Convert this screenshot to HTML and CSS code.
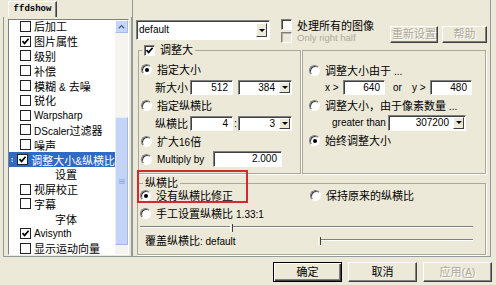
FILE: index.html
```html
<!DOCTYPE html>
<html lang="zh-CN">
<head>
    <meta charset="UTF-8">
    <meta name="viewport" content="width=device-width, initial-scale=1.0">
    <title>ffdshow 设置</title>
    <link rel="stylesheet" href="styles.css">
</head>
<body>
    <div class="window">
        <div class="main">
            <div class="side">
                <div class="tab">ffdshow</div>
                <div class="side-frame">
                    <div class="filter-list">
                        <ul class="items">
                            <li><span class="check"></span>后加工</li>
                            <li><span class="check on"><svg viewBox="0 0 9 9"><path d="M1.5 4.2 L3.6 6.4 L7.6 1.8"/></svg></span>图片属性</li>
                            <li><span class="check"></span>级别</li>
                            <li><span class="check"></span>补偿</li>
                            <li><span class="check"></span><span>模糊 <span class="lat">&amp;</span> 去噪</span></li>
                            <li><span class="check"></span>锐化</li>
                            <li><span class="check"></span><span class="lat">Warpsharp</span></li>
                            <li><span class="check"></span><span><span class="lat">DScaler</span>过滤器</span></li>
                            <li><span class="check"></span>噪声</li>
                            <li class="selected">
                                <svg class="order" viewBox="0 0 5 10"><path d="M2.5 0 L5 3.5 H0 Z M2.5 10 L0 6.5 H5 Z"/></svg>
                                <span class="check on"><svg viewBox="0 0 9 9"><path d="M1.5 4.2 L3.6 6.4 L7.6 1.8"/></svg></span>
                                <span>调整大小<span class="lat">&amp;</span>纵横比</span>
                            </li>
                            <li class="sub">设置</li>
                            <li><span class="check"></span>视屏校正</li>
                            <li><span class="check"></span>字幕</li>
                            <li class="sub">字体</li>
                            <li><span class="check on"><svg viewBox="0 0 9 9"><path d="M1.5 4.2 L3.6 6.4 L7.6 1.8"/></svg></span><span class="lat">Avisynth</span></li>
                            <li><span class="check"></span>显示运动向量</li>
                        </ul>
                        <div class="vscroll">
                            <div class="sb-up"><svg viewBox="0 0 8 5"><polyline points="1,4.5 4,1.5 7,4.5"/></svg></div>
                            <div class="sb-track">
                                <div class="sb-thumb"><svg viewBox="0 0 7 5"><path d="M0 0.5 H7 M0 2.5 H7 M0 4.5 H7"/></svg></div>
                            </div>
                        </div>
                    </div>
                </div>
            </div>

            <div class="page">
                <div class="page-top">
                    <div class="combo preset">
                        <span class="combo-value">default</span>
                        <span class="drop"></span>
                    </div>
                    <div class="checks">
                        <div class="check-row"><span class="box"></span>处理所有的图像</div>
                        <div class="check-row disabled"><span class="box"></span><span class="small">Only right half</span></div>
                    </div>
                    <div class="top-buttons">
                        <div class="btn disabled reset">重新设置</div>
                        <div class="btn disabled help">帮助</div>
                    </div>
                </div>

                <div class="resize-row">
                    <fieldset class="group size-group">
                        <legend><span class="box on"><svg viewBox="0 0 9 9"><path d="M1.5 4.2 L3.6 6.4 L7.6 1.8"/></svg></span>调整大</legend>
                        <div class="opt"><span class="radio on"></span>指定大小</div>
                        <div class="opt indent">
                            <span class="lbl">新大小</span>
                            <span class="field num-a">512</span>
                            <span class="combo num-b"><span class="combo-value">384</span><span class="drop"></span></span>
                        </div>
                        <div class="opt"><span class="radio"></span>指定纵横比</div>
                        <div class="opt indent">
                            <span class="lbl">纵横比</span>
                            <span class="field num-a">4</span><span class="colon">:</span>
                            <span class="combo num-b"><span class="combo-value">3</span><span class="drop"></span></span>
                        </div>
                        <div class="opt"><span class="radio"></span><span>扩大<span class="lat">16</span>倍</span></div>
                        <div class="opt">
                            <span class="radio"></span><span class="mult-label lat">Multiply by</span>
                            <span class="field mult">2.000</span>
                        </div>
                    </fieldset>

                    <fieldset class="group when-group">
                        <div class="opt"><span class="radio"></span><span>调整大小由于 <span class="lat">...</span></span></div>
                        <div class="opt indent lat">
                            <span class="xlbl">x &gt;</span>
                            <span class="field dim">640</span>
                            <span class="or">or</span>
                            <span class="ylbl">y &gt;</span>
                            <span class="field dim">480</span>
                        </div>
                        <div class="opt"><span class="radio"></span><span>调整大小，由于像素数量 <span class="lat">...</span></span></div>
                        <div class="opt indent">
                            <span class="gt lat">greater than</span>
                            <span class="combo pixels"><span class="combo-value">307200</span><span class="drop"></span></span>
                        </div>
                        <div class="opt"><span class="radio on"></span>始终调整大小</div>
                    </fieldset>
                </div>

                <fieldset class="group aspect-group">
                    <legend>纵横比</legend>
                    <div class="aspect-row">
                        <div class="opt"><span class="radio on"></span>没有纵横比修正</div>
                        <div class="opt"><span class="radio"></span>保持原来的纵横比</div>
                    </div>
                    <div class="opt manual"><span class="radio"></span><span>手工设置纵横比 <span class="lat">1.33:1</span></span></div>
                    <div class="slider-row">
                        <div class="slider wide-slider"><span class="thumb" style="left: 90px;"></span></div>
                    </div>
                    <div class="override-row">
                        <span class="override-label">覆盖纵横比<span class="lat">: default</span></span>
                        <div class="slider short-slider"><span class="thumb" style="left: 0px;"></span></div>
                    </div>
                </fieldset>
            </div>
        </div>

        <div class="footer">
            <div class="btn default">确定</div>
            <div class="btn">取消</div>
            <div class="btn disabled">应用(<u class="lat">A</u>)</div>
        </div>

        <div class="highlight-mark"></div>
    </div>
</body>
</html>
```

FILE: styles.css
```css
body {
    margin: 0;
    background-color: #ece9d8;
    font-family: "Liberation Sans", "Noto Sans CJK SC", sans-serif;
    font-size: 11px;
    color: #000;
}

.lat {
    font-size: 10px;
}

.window {
    position: relative;
    width: 496px;
    height: 285px;
    overflow: hidden;
    display: flex;
    flex-direction: column;
}

.main {
    display: flex;
    height: 258px;
}

/* left side: filter list */
.side {
    width: 132px;
    flex-shrink: 0;
}

.tab {
    margin: 1px 0 0 8px;
    width: 47px;
    height: 15px;
    border: 1px solid;
    border-color: #fff #404040 transparent #fff;
    border-bottom: none;
    box-shadow: inset -1px 0 0 #808080;
    font-family: "Liberation Mono", monospace;
    font-weight: bold;
    font-size: 9px;
    line-height: 15px;
    text-align: center;
}

.side-frame {
    margin-left: 3px;
    height: 237px;
    padding: 2px 0 0 4px;
    border-left: 1px solid #919b9c;
    border-bottom: 1px solid #919b9c;
    border-right: 1px solid #919b9c;
}

.filter-list {
    display: flex;
    width: 121px;
    height: 236px;
    box-sizing: border-box;
    background: #fff;
    border: 1px solid;
    border-color: #7f7f7f #fff #fff #7f7f7f;
}

.items {
    list-style: none;
    margin: -1px 0 0 0;
    padding: 0;
    flex: 1;
    overflow: hidden;
}

.items li {
    height: 14.8px;
    display: flex;
    align-items: center;
    padding-left: 11px;
    white-space: nowrap;
}

.items li.selected {
    background: #316ac5;
    color: #fff;
    padding-left: 2px;
}

.items li.sub {
    justify-content: center;
    padding-left: 8px;
}

.order {
    width: 5px;
    height: 10px;
    margin-right: 4px;
    fill: #fff;
}

.check {
    width: 11px;
    height: 11px;
    box-sizing: border-box;
    border: 1px solid #222;
    background: #fff;
    margin-right: 3px;
    flex-shrink: 0;
    display: flex;
    align-items: center;
    justify-content: center;
}

.check svg, .box svg {
    width: 9px;
    height: 9px;
    fill: none;
    stroke: #000;
    stroke-width: 1.7;
}

.vscroll {
    width: 13px;
    display: flex;
    flex-direction: column;
    background: #f5f4ef;
}

.sb-up {
    height: 13px;
    box-sizing: border-box;
    background: #c6d5fa;
    border: 1px solid;
    border-color: #fff #a8bbe9 #a8bbe9 #fff;
    display: flex;
    align-items: center;
    justify-content: center;
}

.sb-up svg {
    width: 7px;
    height: 5px;
    fill: none;
    stroke: #4d6185;
    stroke-width: 1.5;
}

.sb-track {
    flex: 1;
    padding-top: 84px;
}

.sb-thumb {
    height: 128px;
    box-sizing: border-box;
    background: #c4d4f7;
    border: 1px solid;
    border-color: #e6edfd #a5b8e5 #a5b8e5 #e6edfd;
    display: flex;
    align-items: center;
    justify-content: center;
}

.sb-thumb svg {
    width: 6px;
    height: 5px;
    stroke: #8ea4d6;
    stroke-width: 1;
}

/* right side: settings page */
.page {
    width: 359px;
    height: 257px;
    box-sizing: border-box;
    border-left: 1px solid #919b9c;
    border-right: 1px solid #919b9c;
    border-bottom: 1px solid #919b9c;
}

.page-top {
    display: flex;
    align-items: flex-start;
    height: 26px;
    padding-top: 18px;
}

.combo {
    display: flex;
    box-sizing: border-box;
    background: #fff;
    border: 1px solid;
    border-color: #808080 #fff #fff #808080;
    box-shadow: inset 1px 1px 0 #404040;
    font-size: 10px;
}

.combo-value {
    flex: 1;
    padding: 0 3px;
    text-align: right;
}

.preset {
    margin: 2px 0 0 3px;
    width: 134px;
    height: 20px;
    line-height: 18px;
}

.preset .combo-value {
    text-align: left;
    padding-left: 2px;
}

.drop {
    width: 11px;
    margin: 2px;
    box-sizing: border-box;
    background: #ece9d8;
    border: 1px solid;
    border-color: #fff #404040 #404040 #fff;
    display: flex;
    align-items: center;
    justify-content: center;
}

.drop::before {
    content: "";
    border-left: 3px solid transparent;
    border-right: 3px solid transparent;
    border-top: 3px solid #000;
}

.checks {
    margin-left: 11px;
    width: 105px;
}

.check-row {
    height: 13px;
    display: flex;
    align-items: center;
    white-space: nowrap;
}

.check-row.disabled {
    color: #aca899;
}

.small {
    font-size: 9.5px;
}

.box {
    width: 11px;
    height: 11px;
    box-sizing: border-box;
    border: 1px solid;
    border-color: #808080 #fff #fff #808080;
    box-shadow: inset 1px 1px 0 #404040;
    background: #fff;
    margin-right: 5px;
    flex-shrink: 0;
    display: flex;
    align-items: center;
    justify-content: center;
}

.check-row.disabled .box {
    background: #ece9d8;
    box-shadow: inset 1px 1px 0 #b5b2a4;
}

.top-buttons {
    display: flex;
    gap: 4px;
    margin: 8px 0 0 4px;
}

.btn {
    box-sizing: border-box;
    height: 20px;
    width: 69px;
    background: #ece9d8;
    border: 1px solid;
    border-color: #fff #404040 #404040 #fff;
    box-shadow: inset -1px -1px 0 #808080;
    line-height: 18px;
    text-align: center;
    white-space: nowrap;
}

.btn.disabled {
    color: #aca899;
    text-shadow: 1px 1px 0 #fff;
}

.top-buttons .btn {
    height: 17px;
    line-height: 15px;
}

.btn.reset {
    width: 48px;
}

.btn.help {
    width: 45px;
}

.btn.default {
    border-color: #000;
    box-shadow: inset 1px 1px 0 #fff, inset -1px -1px 0 #404040, inset -2px -2px 0 #808080;
}

/* group boxes */
.group {
    margin: 0;
    padding: 0;
    min-width: 0;
    box-sizing: border-box;
    border: 1px solid #aca899;
    box-shadow: 1px 1px 0 #fff;
}

.group legend {
    display: flex;
    align-items: center;
    height: 12px;
    line-height: 12px;
    padding: 0 2px;
    margin-left: 1px;
}

.resize-row {
    display: flex;
    align-items: flex-start;
}

.size-group {
    margin-left: 5px;
    width: 163px;
    height: 130px;
    padding: 4px 0 0 2px;
}

.when-group {
    margin: 6px 0 0 1px;
    width: 184px;
    height: 124px;
    padding: 10px 0 0 6px;
}

.opt {
    display: flex;
    align-items: center;
    height: 18px;
    white-space: nowrap;
}

.when-group .opt.indent {
    height: 17px;
}

.radio {
    position: relative;
    width: 11px;
    height: 11px;
    box-sizing: border-box;
    border-radius: 50%;
    border: 1px solid;
    border-color: #808080 #fff #fff #808080;
    box-shadow: inset 1px 1px 0 #404040;
    background: #fff;
    margin-right: 5px;
    flex-shrink: 0;
}

.radio.on::after {
    content: "";
    position: absolute;
    left: 3px;
    top: 3px;
    width: 4px;
    height: 4px;
    border-radius: 50%;
    background: #000;
}

.field {
    box-sizing: border-box;
    background: #fff;
    border: 1px solid;
    border-color: #808080 #fff #fff #808080;
    box-shadow: inset 1px 1px 0 #404040;
    text-align: right;
    padding-right: 4px;
    font-size: 10px;
}

.size-group .indent {
    padding-left: 14px;
}

.lbl {
    width: 35px;
}

.num-a {
    width: 43px;
    height: 15px;
    line-height: 13px;
}

.colon {
    width: 5px;
    text-align: center;
}

.num-b {
    width: 54px;
    height: 15px;
    line-height: 13px;
    margin-left: 5px;
}

.colon + .num-b {
    margin-left: 0;
}

.num-b .drop, .pixels .drop {
    margin: 1px;
}

.mult-label {
    width: 56px;
}

.mult {
    width: 69px;
    height: 16px;
    line-height: 14px;
}

.when-group .indent {
    padding-left: 16px;
}

.xlbl {
    width: 18px;
}

.dim {
    width: 42px;
    height: 15px;
    line-height: 13px;
}

.or {
    width: 13px;
    padding-left: 8px;
    margin-right: 6px;
}

.ylbl {
    width: 18px;
}

.gt {
    width: 56px;
    padding-left: 7px;
}

.pixels {
    width: 78px;
    height: 16px;
    line-height: 14px;
}

.aspect-group {
    margin: 3px 0 0 4px;
    width: 349px;
    height: 78px;
    padding: 0 0 0 2px;
}

.aspect-group legend {
    margin-left: 3px;
}

.aspect-row {
    display: grid;
    grid-template-columns: 170px 1fr;
    margin-top: -1px;
}

.aspect-row .opt {
    height: 14px;
}

.opt.manual {
    margin-top: 3px;
    height: 16px;
}

.slider-row {
    height: 12px;
    display: flex;
    align-items: center;
}

.slider {
    position: relative;
    height: 2px;
    box-sizing: border-box;
    border-top: 1px solid #808080;
    border-bottom: 1px solid #fff;
}

.wide-slider {
    width: 333px;
}

.short-slider {
    width: 155px;
}

.thumb {
    position: absolute;
    top: -3px;
    width: 3px;
    height: 8px;
    box-sizing: border-box;
    border-left: 1px solid #fff;
    border-right: 1px solid #404040;
    background: #ece9d8;
}

.override-row {
    display: flex;
    align-items: center;
    height: 14px;
}

.override-label {
    width: 173px;
    padding-left: 5px;
}

/* dialog buttons */
.footer {
    display: flex;
    justify-content: flex-end;
    gap: 6px;
    padding: 4px 4px 0 0;
}

.highlight-mark {
    position: absolute;
    left: 137px;
    top: 170px;
    width: 111px;
    height: 33px;
    box-sizing: border-box;
    border: 2px solid #d5282f;
}
```
